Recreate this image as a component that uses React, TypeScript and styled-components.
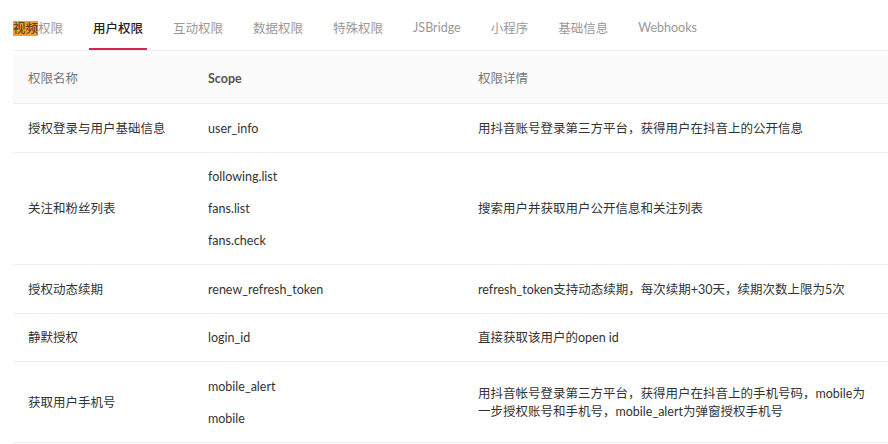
import React from "react";
import styled, { createGlobalStyle } from "styled-components";

const Global = createGlobalStyle`
  html, body { margin: 0; padding: 0; background: #fff; overflow: hidden; }
  body { font-family: "Lato", "Noto Sans CJK SC", sans-serif; font-size: 12.5px; color: #333; }
`;

const Page = styled.div`
  width: 891px;
  padding-left: 13px;
  box-sizing: border-box;
`;

const TabBar = styled.div`
  display: flex;
  gap: 22px;
  height: 50px;
  border-bottom: 1px solid #eeeeee;
`;

const Tab = styled.div<{ $active?: boolean; $first?: boolean }>`
  display: flex;
  align-items: center;
  padding: 6px 4px 0;
  margin-left: ${(p) => (p.$first ? "-4px" : "0")};
  font-size: 12.5px;
  color: ${(p) => (p.$active ? "#222" : "#999")};
  font-weight: ${(p) => (p.$active ? 500 : 400)};
  border-bottom: 2px solid ${(p) => (p.$active ? "#d7244f" : "transparent")};
  box-sizing: border-box;
`;

const Mark = styled.span`
  background: #f49b2a;
  color: #333;
`;

const Table = styled.table`
  width: 100%;
  margin-top: 4px;
  border-collapse: collapse;
  table-layout: fixed;
`;

const Th = styled.th<{ $bold?: boolean; $w?: string }>`
  text-align: left;
  background: #fafafa;
  padding: 8px 15px 8px;
  line-height: 32px;
  font-weight: ${(p) => (p.$bold ? 700 : 400)};
  color: ${(p) => (p.$bold ? "#555" : "#777")};
  border-bottom: 1px solid #eeeeee;
  width: ${(p) => p.$w || "auto"};
`;

const Td = styled.td`
  padding: 8.5px 15px 7px;
  line-height: 32px;
  vertical-align: middle;
  border-bottom: 1px solid #eeeeee;
  color: #333;
`;

const Desc = styled.div`
  line-height: 18px;
`;

const Scope = styled.div`
  line-height: 32px;
`;

const tabs = ["视频权限", "用户权限", "互动权限", "数据权限", "特殊权限", "JSBridge", "小程序", "基础信息", "Webhooks"];

const rows = [
  { name: "授权登录与用户基础信息", scopes: ["user_info"], desc: "用抖音账号登录第三方平台，获得用户在抖音上的公开信息" },
  { name: "关注和粉丝列表", scopes: ["following.list", "fans.list", "fans.check"], desc: "搜索用户并获取用户公开信息和关注列表" },
  { name: "授权动态续期", scopes: ["renew_refresh_token"], desc: "refresh_token支持动态续期，每次续期+30天，续期次数上限为5次" },
  { name: "静默授权", scopes: ["login_id"], desc: "直接获取该用户的open id" },
  { name: "获取用户手机号", scopes: ["mobile_alert", "mobile"], desc: "用抖音帐号登录第三方平台，获得用户在抖音上的手机号码，mobile为一步授权账号和手机号，mobile_alert为弹窗授权手机号" },
];

export default function App() {
  return (
    <Page>
      <Global />
      <TabBar>
        {tabs.map((t, i) => (
          <Tab key={t} $active={i === 1} $first={i === 0}>
            {i === 0 ? (
              <span>
                <Mark>视频</Mark>权限
              </span>
            ) : (
              t
            )}
          </Tab>
        ))}
      </TabBar>
      <Table>
        <thead>
          <tr>
            <Th $w="150px">权限名称</Th>
            <Th $bold $w="240px">Scope</Th>
            <Th>权限详情</Th>
          </tr>
        </thead>
        <tbody>
          {rows.map((r) => (
            <tr key={r.name}>
              <Td>{r.name}</Td>
              <Td>
                {r.scopes.map((s) => (
                  <Scope key={s}>{s}</Scope>
                ))}
              </Td>
              <Td>
                <Desc>{r.desc}</Desc>
              </Td>
            </tr>
          ))}
        </tbody>
      </Table>
    </Page>
  );
}
